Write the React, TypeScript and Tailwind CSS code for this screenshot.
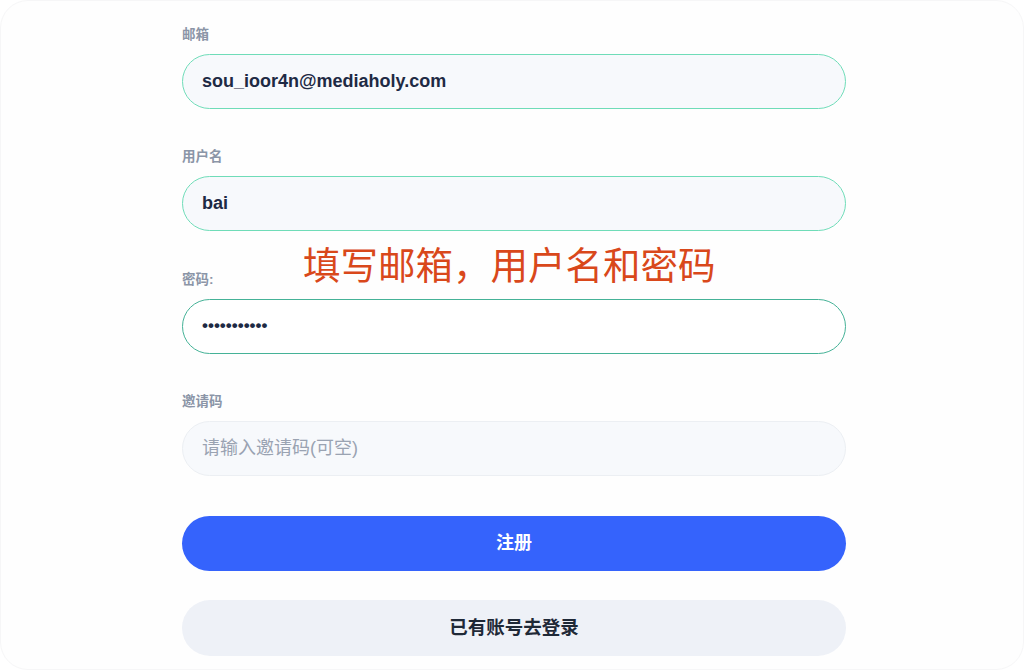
const FONT = "font-['Liberation_Sans','Noto_Sans_CJK_SC',sans-serif]";

function Field({
  label,
  children,
}: {
  label: string;
  children: React.ReactNode;
}) {
  return (
    <div className="flex flex-col">
      <label className="h-[18px] leading-[18px] text-[13.5px] font-bold text-[#8b95a7] mb-[10px]">
        {label}
      </label>
      {children}
    </div>
  );
}

export default function App() {
  return (
    <div className={`w-[1024px] h-[670px] bg-white overflow-hidden ${FONT}`}>
      <div className="relative w-full h-full rounded-[28px] border border-[#f6f6f7] bg-[#fefefe] overflow-hidden">
        <div className="w-[664px] ml-[181px] pt-[24.5px] flex flex-col gap-[39.5px]">
          <Field label="邮箱">
            <div className="h-[55px] rounded-full border border-[#6fdcb8] bg-[#f7f9fc] pl-[19px] flex items-center text-[18px] font-bold text-[#1e2a44]">
              sou_ioor4n@mediaholy.com
            </div>
          </Field>
          <Field label="用户名">
            <div className="h-[55px] rounded-full border border-[#6fdcb8] bg-[#f7f9fc] pl-[19px] flex items-center text-[18px] font-bold text-[#1e2a44]">
              bai
            </div>
          </Field>
          <Field label="密码:">
            <div className="h-[55px] rounded-full border border-[#45b297] bg-white pl-[19px] flex items-center text-[17px] font-bold text-[#1e2a44]">
              •••••••••••
            </div>
          </Field>
          <Field label="邀请码">
            <div className="h-[55px] rounded-full border border-[#eceff3] bg-[#f7f9fc] pl-[19px] flex items-center text-[18px] text-[#9aa3b2]">
              请输入邀请码(可空)
            </div>
          </Field>
          <div className="flex flex-col gap-[29px]">
            <button className="h-[55px] rounded-full bg-[#3563fc] text-white text-[18px] font-bold">
              注册
            </button>
            <button className="h-[56px] rounded-full bg-[#eef1f7] text-[#1f2937] text-[18.5px] font-bold">
              已有账号去登录
            </button>
          </div>
        </div>
        <div className="absolute left-[302px] top-[240px] text-[37.5px] leading-[44px] text-[#d9481b] font-['Noto_Sans_CJK_SC',sans-serif]">
          填写邮箱，用户名和密码
        </div>
      </div>
    </div>
  );
}
